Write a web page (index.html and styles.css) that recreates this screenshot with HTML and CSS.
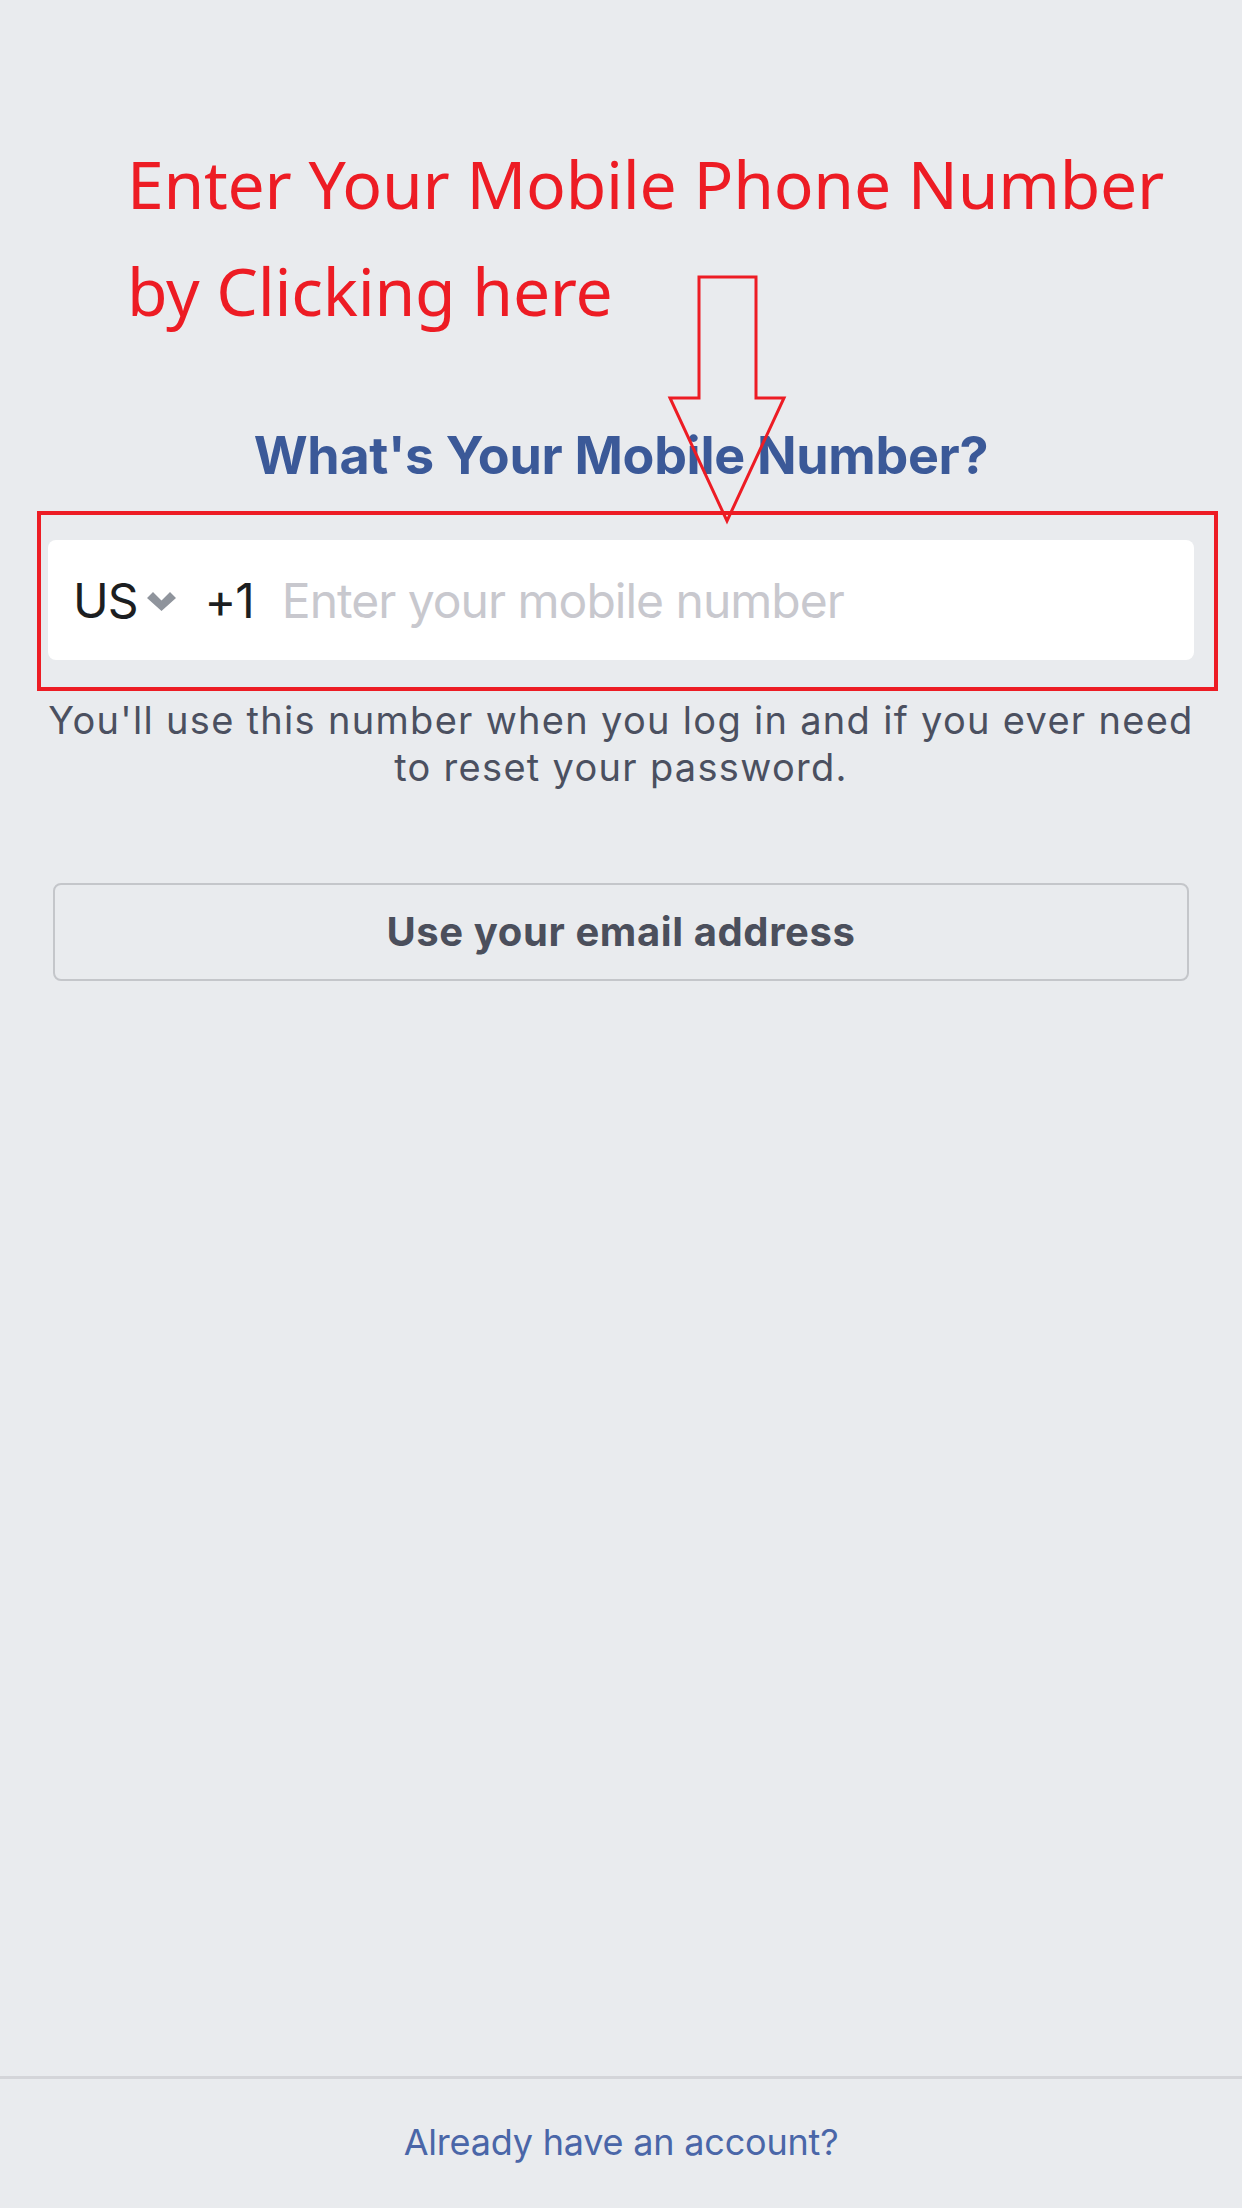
FILE: index.html
```html
<!DOCTYPE html>
<html>
<head>
<meta charset="utf-8">
<link rel="stylesheet" href="styles.css">
</head>
<body>
<div class="page">
  <main class="content">
    <div class="annotation">
      <div class="anno-line">Enter Your Mobile Phone Number</div>
      <div class="anno-line">by Clicking here</div>
    </div>
    <h1 class="title">What's Your Mobile Number?</h1>
    <div class="field">
      <span class="country">US</span>
      <svg class="chevron" width="29" height="19" viewBox="0 0 29 19"><path d="M0 6 L6 0 L14.5 8.5 L23 0 L29 6 L14.5 19 Z" fill="#8f949c"/></svg>
      <span class="code">+1</span>
      <span class="placeholder">Enter your mobile number</span>
    </div>
    <p class="help">You'll use this number when you log in and if you ever need to reset your password.</p>
    <div class="email-btn">Use your email address</div>
  </main>
  <footer class="footer">
    <span class="login-link">Already have an account?</span>
  </footer>
  <div class="highlight-box"></div>
  <svg class="arrow" width="1242" height="2208" viewBox="0 0 1242 2208">
    <path d="M699 277 L756 277 L756 398 L784 398 L727 521 L670 398 L699 398 Z" fill="none" stroke="#ed1c24" stroke-width="3"/>
  </svg>
</div>
</body>
</html>
```
FILE: styles.css
```css
html, body {
  margin: 0;
  padding: 0;
  background: #e9ebee;
}
.page {
  position: relative;
  width: 1242px;
  height: 2208px;
  display: flex;
  flex-direction: column;
  background: #e9ebee;
  font-family: Inter, "Liberation Sans", sans-serif;
  overflow: hidden;
}
.content {
  flex: 1;
  display: flex;
  flex-direction: column;
}
.annotation {
  padding-top: 130px;
  padding-left: 127px;
}
.anno-line {
  font-family: "Noto Sans", sans-serif;
  font-size: 66px;
  line-height: 107px;
  color: #ed1c24;
  white-space: nowrap;
  letter-spacing: -0.25px;
}
.title {
  margin: 81px 0 0;
  text-align: center;
  font-size: 52px;
  line-height: 62px;
  font-weight: 700;
  color: #3b5998;
  letter-spacing: -0.3px;
}
.field {
  margin: 53px 48px 0;
  height: 120px;
  background: #ffffff;
  border-radius: 8px;
  display: flex;
  align-items: center;
  padding-left: 25px;
  font-size: 48px;
  letter-spacing: -1px;
  color: #1c1e21;
}
.chevron {
  margin-left: 9px;
  margin-top: 2px;
}
.code {
  margin-left: 29px;
}
.placeholder {
  margin-left: 28px;
  color: #c8c8ce;
}
.help {
  margin: 37px 30px 0;
  text-align: center;
  font-size: 38px;
  line-height: 47.4px;
  letter-spacing: 1.3px;
  color: #4b5060;
}
.email-btn {
  margin: 91px 53px 0;
  height: 94px;
  border: 2px solid #c4c6ca;
  border-radius: 8px;
  display: flex;
  align-items: center;
  justify-content: center;
  font-size: 40px;
  font-weight: 700;
  letter-spacing: 0.6px;
  color: #4b4f5c;
}
.footer {
  height: 132px;
  border-top: 3px solid #d4d5d9;
  display: flex;
  align-items: center;
  justify-content: center;
  padding-bottom: 3px;
  box-sizing: border-box;
}
.login-link {
  font-size: 36px;
  letter-spacing: -0.2px;
  color: #4a66a8;
}
.highlight-box {
  position: absolute;
  left: 37px;
  top: 511px;
  width: 1173px;
  height: 172px;
  border: 4px solid #ed1c24;
}
.arrow {
  position: absolute;
  left: 0;
  top: 0;
  pointer-events: none;
}
```
